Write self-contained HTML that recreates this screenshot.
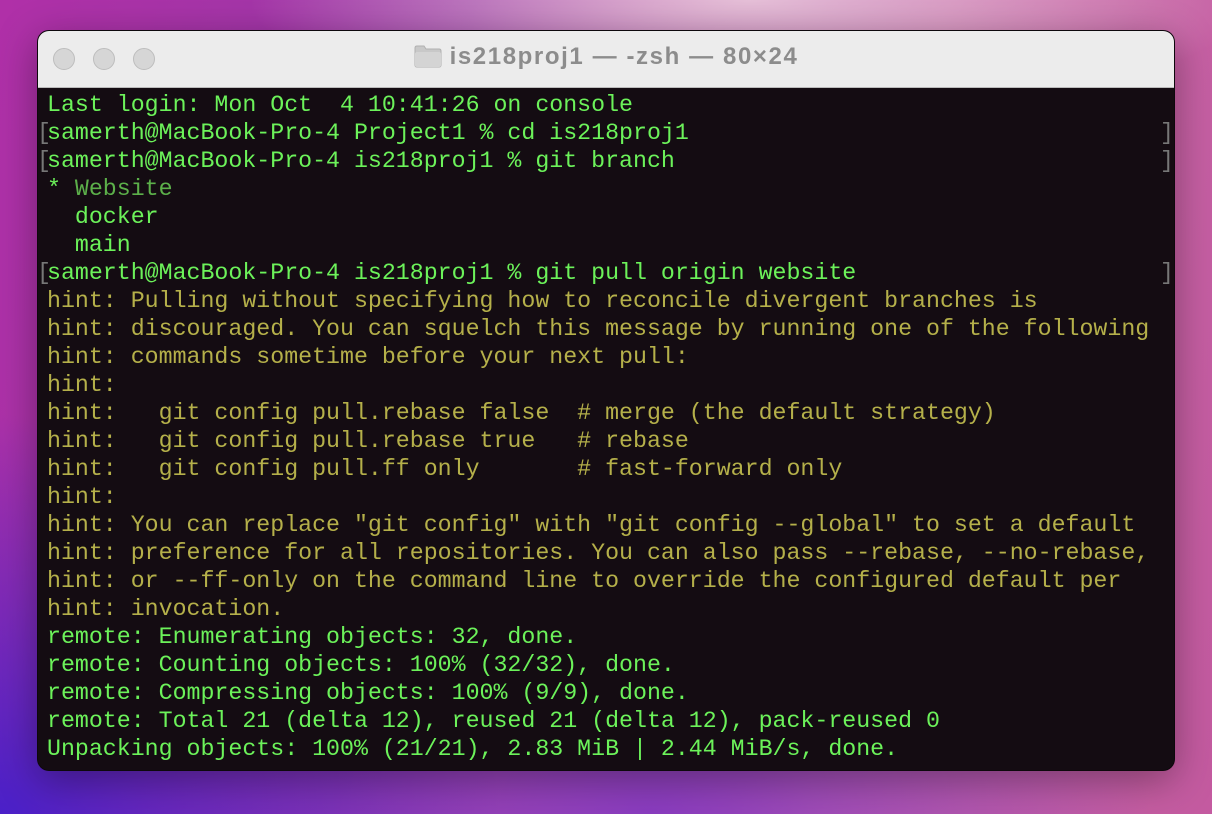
<!DOCTYPE html>
<html><head><meta charset="utf-8"><style>
html,body{margin:0;padding:0;width:1212px;height:814px;overflow:hidden}
body{background:
radial-gradient(ellipse 500px 400px at 0px 814px,#4a20c8 0%,rgba(74,32,200,0) 100%),
radial-gradient(ellipse 500px 300px at 650px 814px,#8a3cc0 0%,rgba(138,60,192,0) 100%),
radial-gradient(ellipse 500px 120px at 750px 0px,#e6c0d8 0%,rgba(230,192,216,0) 100%),
linear-gradient(100deg,#b030a8 0%,#9a3aa8 35%,#c86aa8 70%,#c45aa0 100%);position:relative}
.win{position:absolute;left:37px;top:30px;width:1138px;height:741px;border-radius:12px;overflow:hidden;background:#140c12;box-shadow:0 10px 40px rgba(0,0,0,.35);border:1px solid rgba(0,0,0,.3);box-sizing:border-box}
.tb{height:56px;background:#ececec;position:relative;border-bottom:1px solid #bbb}
.dot{position:absolute;top:17px;width:22px;height:22px;border-radius:50%;background:#d6d6d6;border:1px solid #bdbdbd;box-sizing:border-box}
.title{position:absolute;left:0;right:0;top:12px;text-align:center;font:bold 24px "Liberation Sans",sans-serif;letter-spacing:1.6px;color:#8c8c8c}
.fold{display:inline-block;width:28px;height:24px;vertical-align:-4px;margin-right:8px;position:relative}
pre{position:absolute;left:9px;top:60px;width:1125px;margin:0;font:23.25px/28px "Liberation Mono",monospace;color:#6cf25a;white-space:pre}
.h{color:#b5b04a}.w{color:#5cb04a}.b{color:#777;position:absolute;left:-10px}
.rb{position:absolute;left:1113px;color:#777}
</style></head><body>
<div class="win">
<div class="tb">
<div class="dot" style="left:15px"></div><div class="dot" style="left:55px"></div><div class="dot" style="left:95px"></div>
<div class="title"><span class="fold"><svg width="28" height="24" viewBox="0 0 28 24"><path d="M1 4 Q1 2 3 2 H10 L12 5 H25 Q27 5 27 7 V21 Q27 23 25 23 H3 Q1 23 1 21Z" fill="#c8c8c8" stroke="#b0b0b0"/><rect x="1" y="8" width="26" height="15" rx="2" fill="#d4d4d4"/></svg></span>is218proj1 — -zsh — 80×24</div>
</div>
<pre>Last login: Mon Oct  4 10:41:26 on console
<span class="b">[</span>samerth@MacBook-Pro-4 Project1 % cd is218proj1<span class="rb">]</span>
<span class="b">[</span>samerth@MacBook-Pro-4 is218proj1 % git branch<span class="rb">]</span>
* <span class="w">Website</span>
  docker
  main
<span class="b">[</span>samerth@MacBook-Pro-4 is218proj1 % git pull origin website<span class="rb">]</span>
<span class="h">hint: Pulling without specifying how to reconcile divergent branches is
hint: discouraged. You can squelch this message by running one of the following
hint: commands sometime before your next pull:
hint:
hint:   git config pull.rebase false  # merge (the default strategy)
hint:   git config pull.rebase true   # rebase
hint:   git config pull.ff only       # fast-forward only
hint:
hint: You can replace "git config" with "git config --global" to set a default
hint: preference for all repositories. You can also pass --rebase, --no-rebase,
hint: or --ff-only on the command line to override the configured default per
hint: invocation.</span>
remote: Enumerating objects: 32, done.
remote: Counting objects: 100% (32/32), done.
remote: Compressing objects: 100% (9/9), done.
remote: Total 21 (delta 12), reused 21 (delta 12), pack-reused 0
Unpacking objects: 100% (21/21), 2.83 MiB | 2.44 MiB/s, done.</pre>
</div>
</body></html>
